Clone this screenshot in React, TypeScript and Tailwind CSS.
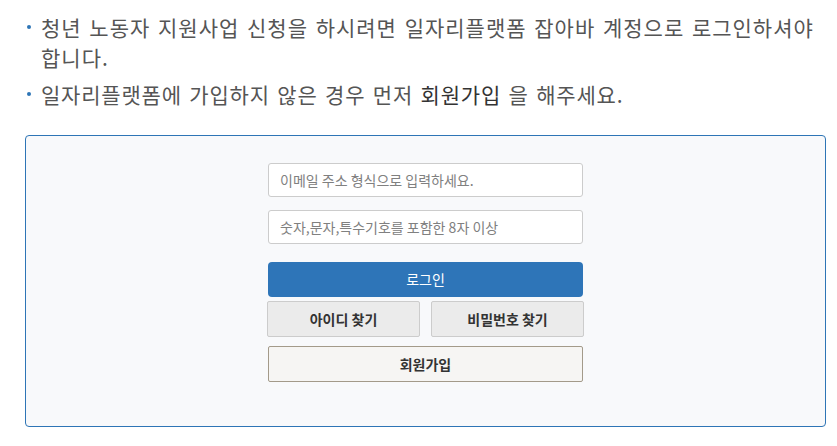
import React from "react";

export default function App() {
  const font = { fontFamily: '"Noto Sans CJK KR", "Noto Sans", sans-serif' };
  return (
    <div className="w-[837px] h-[446px] bg-white pl-[25px] pr-[11px]" style={font}>
      <ul className="pt-[12px] pl-[16px] text-[21px] leading-[30px] text-[#555555] tracking-[1px] [word-spacing:2px]">
        <li className="relative pl-[0px]">
          <span className="absolute left-[-14px] top-[13px] w-[4px] h-[4px] rounded-full bg-[#2e75b6]" />
          청년 노동자 지원사업 신청을 하시려면 일자리플랫폼 잡아바 계정으로 로그인하셔야 합니다.
        </li>
        <li className="relative mt-[7px] tracking-[0.8px]">
          <span className="absolute left-[-14px] top-[13px] w-[4px] h-[4px] rounded-full bg-[#2e75b6]" />
          일자리플랫폼에 가입하지 않은 경우 먼저 <span className="text-[#333333]">회원가입</span> 을 해주세요.
        </li>
      </ul>
      <div className="mt-[26px] w-[801px] h-[292px] border border-[#2e75b6] rounded-[4px] bg-[#f8f9fb] flex justify-center pt-[27px]">
        <div className="w-[315px] flex flex-col">
          <input
            className="h-[34px] w-full border border-[#cccccc] rounded-[3px] bg-white px-[11px] text-[14px] outline-none placeholder:text-[#808080]"
            placeholder="이메일 주소 형식으로 입력하세요."
          />
          <input
            className="mt-[13px] h-[34px] w-full border border-[#cccccc] rounded-[3px] bg-white px-[11px] text-[14px] outline-none placeholder:text-[#808080]"
            placeholder="숫자,문자,특수기호를 포함한 8자 이상"
          />
          <button className="mt-[18px] h-[35px] w-full rounded-[4px] bg-[#2e75b8] text-white text-[14px] font-normal">
            로그인
          </button>
          <div className="mt-[4px] flex justify-between -mx-[1px]">
            <button className="w-[153px] h-[36px] border border-[#cccccc] rounded-[2px] bg-[#ebebeb] text-[14px] font-bold text-[#333333]">
              아이디 찾기
            </button>
            <button className="w-[153px] h-[36px] border border-[#cccccc] rounded-[2px] bg-[#ebebeb] text-[14px] font-bold text-[#333333]">
              비밀번호 찾기
            </button>
          </div>
          <button className="mt-[9px] h-[36px] w-full border border-[#a39a8a] rounded-[2px] bg-[#f6f5f3] text-[14px] font-bold text-[#333333]">
            회원가입
          </button>
        </div>
      </div>
    </div>
  );
}
